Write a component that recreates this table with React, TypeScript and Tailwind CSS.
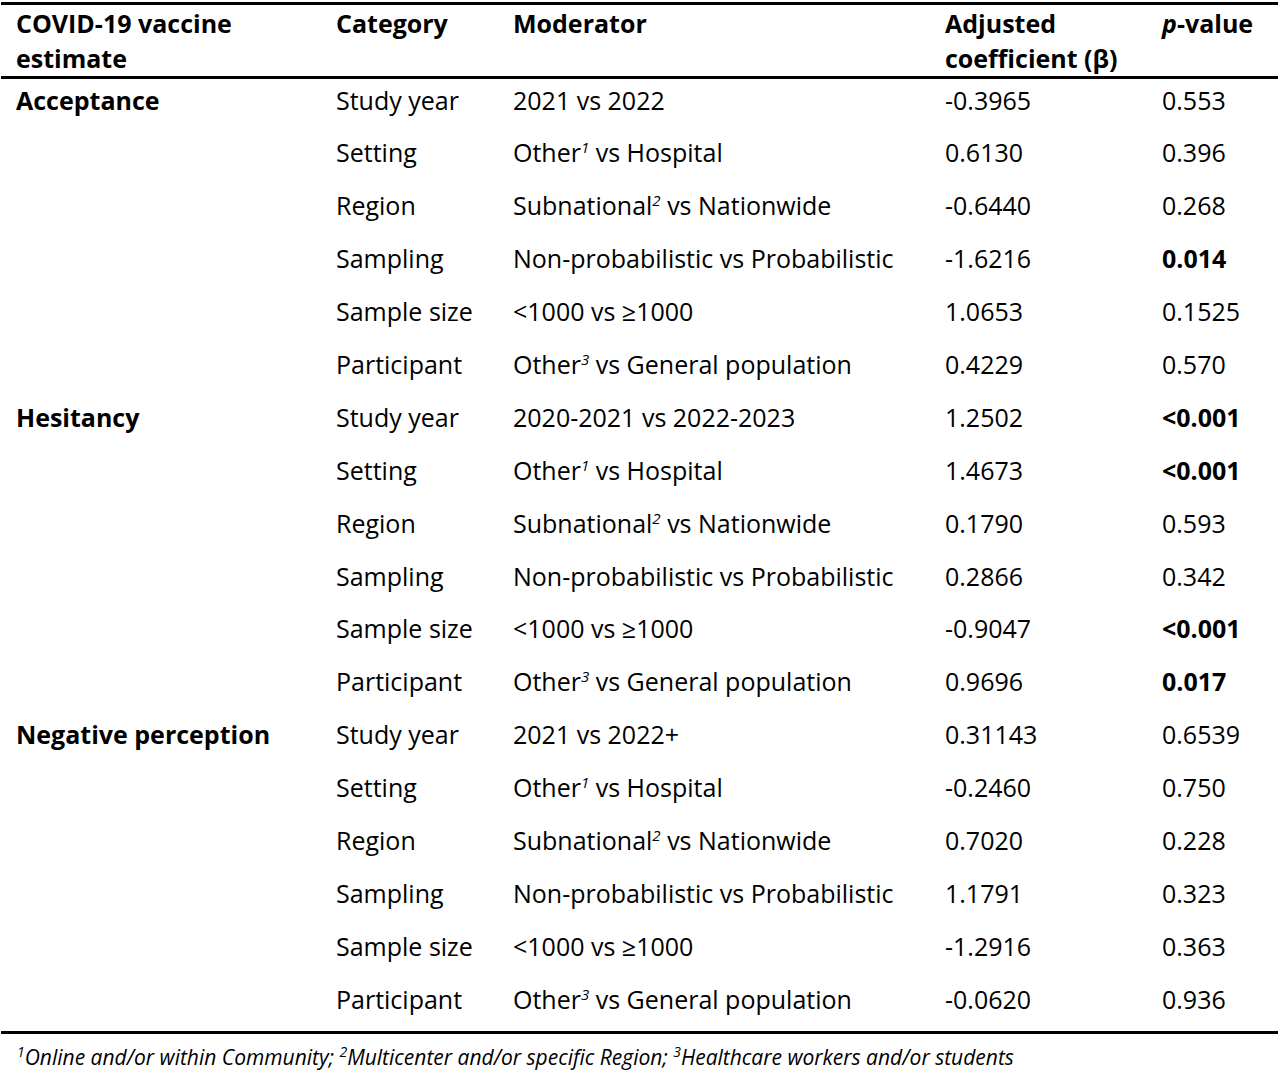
import React from "react";

type Row = { est?: string; cat: string; mod: React.ReactNode; coef: string; p: string; bold?: boolean };

const Sup = ({ n }: { n: string }) => (
  <sup className="italic text-[15px] relative -top-[9px] align-baseline">{n}</sup>
);

const FSup = ({ n }: { n: string }) => (
  <sup className="italic text-[14px] relative -top-[8px] align-baseline">{n}</sup>
);

const other = (n: string, rest: string) => (
  <>
    {n === "2" ? "Subnational" : "Other"}
    <Sup n={n} /> {rest}
  </>
);

const block = (
  est: string,
  y: string,
  vals: [string, string, boolean?][]
): Row[] => [
  { est, cat: "Study year", mod: y, coef: vals[0][0], p: vals[0][1], bold: vals[0][2] },
  { cat: "Setting", mod: other("1", "vs Hospital"), coef: vals[1][0], p: vals[1][1], bold: vals[1][2] },
  { cat: "Region", mod: other("2", "vs Nationwide"), coef: vals[2][0], p: vals[2][1], bold: vals[2][2] },
  { cat: "Sampling", mod: "Non-probabilistic vs Probabilistic", coef: vals[3][0], p: vals[3][1], bold: vals[3][2] },
  { cat: "Sample size", mod: "<1000 vs \u22651000", coef: vals[4][0], p: vals[4][1], bold: vals[4][2] },
  { cat: "Participant", mod: other("3", "vs General population"), coef: vals[5][0], p: vals[5][1], bold: vals[5][2] },
];

const rows: Row[] = [
  ...block("Acceptance", "2021 vs 2022", [
    ["-0.3965", "0.553"],
    ["0.6130", "0.396"],
    ["-0.6440", "0.268"],
    ["-1.6216", "0.014", true],
    ["1.0653", "0.1525"],
    ["0.4229", "0.570"],
  ]),
  ...block("Hesitancy", "2020-2021 vs 2022-2023", [
    ["1.2502", "<0.001", true],
    ["1.4673", "<0.001", true],
    ["0.1790", "0.593"],
    ["0.2866", "0.342"],
    ["-0.9047", "<0.001", true],
    ["0.9696", "0.017", true],
  ]),
  ...block("Negative perception", "2021 vs 2022+", [
    ["0.31143", "0.6539"],
    ["-0.2460", "0.750"],
    ["0.7020", "0.228"],
    ["1.1791", "0.323"],
    ["-1.2916", "0.363"],
    ["-0.0620", "0.936"],
  ]),
];

export default function App() {
  return (
    <div
      className="w-[1280px] h-[1072px] bg-white text-black overflow-hidden"
      style={{ fontFamily: '"Open Sans", "Noto Sans", sans-serif' }}
    >
      <div className="pt-[2px] w-[1277px] ml-[1px]">
        <div className="border-t-[3px] border-b-[3px] border-black">
          <div className="flex text-[25px] font-bold leading-[35px] pt-[1px] pl-[15px]">
            <div className="w-[320px]">COVID-19 vaccine<br />estimate</div>
            <div className="w-[177px]">Category</div>
            <div className="w-[432px]">Moderator</div>
            <div className="w-[217px]">Adjusted<br />coefficient (β)</div>
            <div>
              <span className="italic">p</span>-value
            </div>
          </div>
        </div>
        <div className="border-b-[3px] border-black">
          {rows.map((r, i) => (
            <div key={i} className="flex h-[52.9px] text-[25px] leading-[35px] pt-[3.5px] pl-[15px]">
              <div className="w-[320px] font-bold">{r.est ?? ""}</div>
              <div className="w-[177px]">{r.cat}</div>
              <div className="w-[432px]">{r.mod}</div>
              <div className="w-[217px]">{r.coef}</div>
              <div className={r.bold ? "font-bold" : ""}>{r.p}</div>
            </div>
          ))}
        </div>
        <div className="italic text-[21px] leading-[28px] pt-[9px] pl-[16px] whitespace-nowrap">
          <FSup n="1" />Online and/or within Community; <FSup n="2" />Multicenter and/or specific Region; <FSup n="3" />Healthcare workers and/or students
        </div>
      </div>
    </div>
  );
}
